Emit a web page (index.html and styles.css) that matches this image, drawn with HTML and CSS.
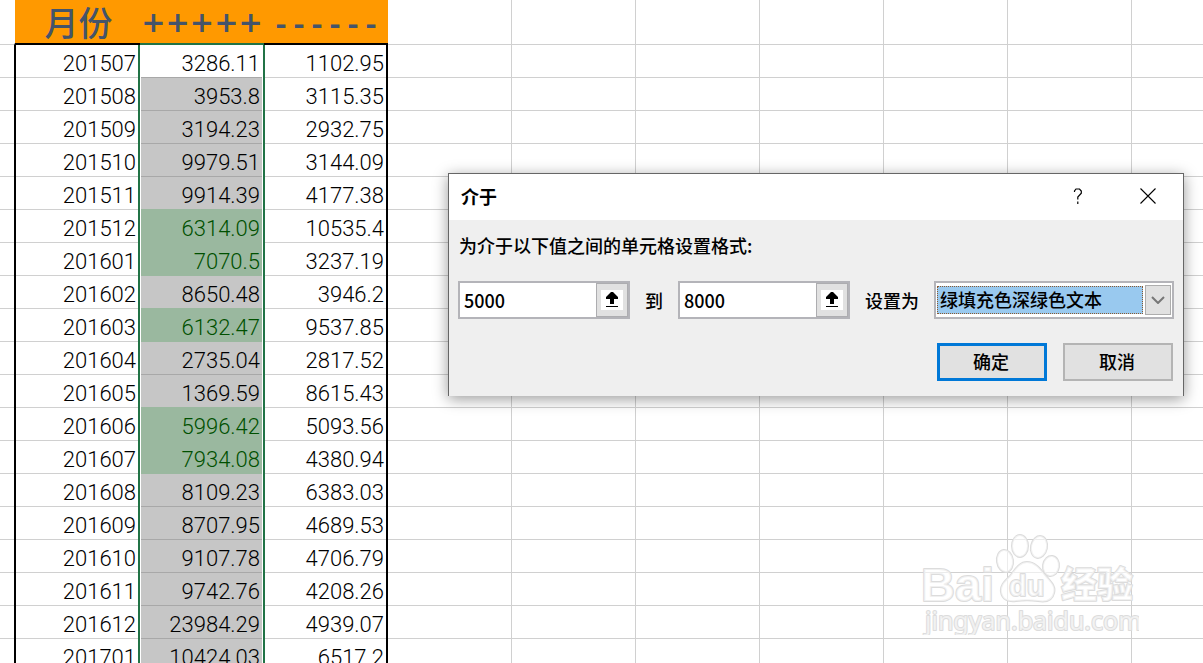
FILE: index.html
```html
<!DOCTYPE html>
<html lang="zh-CN">
<head>
    <meta charset="UTF-8">
    <meta name="viewport" content="width=device-width, initial-scale=1.0">
    <title>介于</title>
    <link rel="stylesheet" href="styles.css">
</head>
<body>
    <main class="sheet">
        <table class="data">
            <colgroup>
                <col class="col-month">
                <col class="col-value">
                <col class="col-value">
            </colgroup>
            <thead>
                <tr><th class="month">月份</th><th class="plus">+++++</th><th class="minus">------</th></tr>
            </thead>
            <tbody>
                <tr><td>201507</td><td class="active">3286.11</td><td>1102.95</td></tr>
                <tr><td>201508</td><td>3953.8</td><td>3115.35</td></tr>
                <tr><td>201509</td><td>3194.23</td><td>2932.75</td></tr>
                <tr><td>201510</td><td>9979.51</td><td>3144.09</td></tr>
                <tr><td>201511</td><td>9914.39</td><td>4177.38</td></tr>
                <tr><td>201512</td><td class="good">6314.09</td><td>10535.4</td></tr>
                <tr><td>201601</td><td class="good">7070.5</td><td>3237.19</td></tr>
                <tr><td>201602</td><td>8650.48</td><td>3946.2</td></tr>
                <tr><td>201603</td><td class="good">6132.47</td><td>9537.85</td></tr>
                <tr><td>201604</td><td>2735.04</td><td>2817.52</td></tr>
                <tr><td>201605</td><td>1369.59</td><td>8615.43</td></tr>
                <tr><td>201606</td><td class="good">5996.42</td><td>5093.56</td></tr>
                <tr><td>201607</td><td class="good">7934.08</td><td>4380.94</td></tr>
                <tr><td>201608</td><td>8109.23</td><td>6383.03</td></tr>
                <tr><td>201609</td><td>8707.95</td><td>4689.53</td></tr>
                <tr><td>201610</td><td>9107.78</td><td>4706.79</td></tr>
                <tr><td>201611</td><td>9742.76</td><td>4208.26</td></tr>
                <tr><td>201612</td><td>23984.29</td><td>4939.07</td></tr>
                <tr><td>201701</td><td>10424.03</td><td>6517.2</td></tr>
            </tbody>
        </table>
    </main>

    <form class="dialog" role="dialog" aria-labelledby="dialog-title">
        <header class="titlebar">
            <h1 id="dialog-title">介于</h1>
            <button type="button" class="title-btn" aria-label="帮助">
                <svg width="10" height="16" viewBox="0 0 10 16"><path d="M1.5 4V3L3 1h3.500L8.300 3v2.200L4.800 9v2.500M4.800 13.500V16" fill="none" stroke="#000" stroke-width="1.2"/></svg>
            </button>
            <button type="button" class="title-btn" aria-label="关闭">
                <svg width="16" height="16" viewBox="0 0 16 16"><path d="M.5.5l15 15M15.5.5l-15 15" stroke="#000" stroke-width="1.1"/></svg>
            </button>
        </header>
        <div class="dialog-body">
            <p>为介于以下值之间的单元格设置格式:</p>
            <div class="fields">
                <div class="ref-box">
                    <input type="text" id="from" value="5000" aria-label="最小值">
                    <button type="button" aria-label="选择单元格">
                        <svg width="22" height="20" viewBox="0 0 22 20"><path fill="#fff" d="M0 0h22v20H0z"/><path d="M10 2h2l5 5v2h-4v5H9V9H5V7zM5 16h12v1H5z"/></svg>
                    </button>
                </div>
                <label for="to">到</label>
                <div class="ref-box">
                    <input type="text" id="to" value="8000">
                    <button type="button" aria-label="选择单元格">
                        <svg width="22" height="20" viewBox="0 0 22 20"><path fill="#fff" d="M0 0h22v20H0z"/><path d="M10 2h2l5 5v2h-4v5H9V9H5V7zM5 16h12v1H5z"/></svg>
                    </button>
                </div>
                <label for="format">设置为</label>
                <div class="combo">
                    <select id="format">
                        <option>绿填充色深绿色文本</option>
                    </select>
                    <span class="arrow">
                        <svg width="14" height="8" viewBox="0 0 14 8"><path d="M1 1l6 6 6-6" fill="none" stroke="#777" stroke-width="2"/></svg>
                    </span>
                </div>
            </div>
            <div class="actions">
                <button type="submit" class="btn primary">确定</button>
                <button type="button" class="btn">取消</button>
            </div>
        </div>
    </form>

    <!-- watermark -->
    <svg class="watermark" width="220" height="106" viewBox="0 0 220 106">
        <ellipse cx="86" cy="32" rx="8" ry="11" transform="rotate(-8 86 32)"/>
        <ellipse cx="101" cy="17" rx="8" ry="11"/>
        <ellipse cx="120" cy="18" rx="8" ry="11" transform="rotate(12 120 18)"/>
        <ellipse cx="132" cy="37" rx="8" ry="10" transform="rotate(8 132 37)"/>
        <path d="M108 33c9 0 14 8 19 14 5 6 10 10 8 17-2 9-10 9-16 8-8-1-14-1-22 0-7 1-14-1-15-9-1-7 4-11 9-16 5-6 9-14 17-14z"/>
        <text class="wm-logo" x="2" y="72">Bai</text>
        <text class="wm-du" x="90" y="67">du</text>
        <text class="wm-cn" x="142" y="69">经验</text>
        <text class="wm-url" x="6" y="101">jingyan.baidu.com</text>
    </svg>
</body>
</html>
```
FILE: styles.css
```css
* {
    box-sizing: border-box;
}
body {
    margin: 0;
    height: 100vh;
    overflow: hidden;
    position: relative;
    font-family: "Noto Sans CJK SC", sans-serif;
    color: #000;
}

/* sheet: grid lines every 124px across and every 33px down,
   the taller header row hides the first horizontal one */
.sheet {
    --green: #217346;
    min-height: 100vh;
    padding-left: 14px;
    background-color: #fff;
    background-image:
        linear-gradient(to right, #d0d0d0 1px, transparent 1px),
        linear-gradient(#fff, #fff),
        linear-gradient(to bottom, #d0d0d0 1px, transparent 1px);
    background-size: 124px 100%, 100% 44px, 100% 33px;
    background-position: 15px 0, 0 0, 0 11px;
    background-repeat: repeat, no-repeat, repeat;
}
.data {
    table-layout: fixed;
    width: 374px;
    border-collapse: separate;
    border-spacing: 0;
}
.col-month {
    width: 126px;
}
.col-value {
    width: 124px;
}
.data th {
    height: 45px;
    padding: 0;
    background: #ff9900;
    border-bottom: 2px solid #000;
    color: #44546a;
    line-height: 42px;
    font-weight: 700;
}
.data .month {
    padding-left: 2px;
    border-left: 1px solid #fff;
    font-size: 34px;
    font-weight: 500;
}
.data .plus {
    border-bottom-color: var(--green);
    font-family: "DejaVu Sans", sans-serif;
    font-size: 29px;
}
.data .minus {
    padding-top: 8px;
    font-family: "Liberation Mono", monospace;
    font-size: 30px;
    line-height: 34px;
}
/* row lines are inset shadows, so the column borders stay unbroken */
.data td {
    --line: #d0d0d0;
    height: 33px;
    padding: 5px 3px 0 0;
    font-family: Roboto, "Liberation Sans", sans-serif;
    font-size: 22px;
    font-weight: 300;
    line-height: 28px;
    text-align: right;
    background: #fff;
    box-shadow: inset 0 -1px var(--line);
}
.data td:first-child {
    border-left: 2px solid #000;
    border-right: 2px solid var(--green);
    padding-right: 2px;
}
.data td:nth-child(2) {
    --line: #a8a8a8;
    background: #c6c6c6;
    border-right: 1px solid var(--green);
    box-shadow: inset 1px 0 #fff, inset -1px 0 #fff, inset 0 -1px var(--line);
}
.data td:nth-child(3) {
    border-left: 1px solid var(--green);
    border-right: 2px solid #000;
    padding-right: 2px;
}
.data td.active {
    background: #fff;
}
.data td.good {
    background: #9ab89f;
    color: #005000;
}
.data td.good,
.data tr:has(+ tr .good) td:nth-child(2) {
    --line: #9ab89f;
}

/* dialog */
.dialog {
    position: absolute;
    top: 173px;
    right: 19px;
    width: 736px;
    background: #efefef;
    border: 1px solid #666;
    border-bottom: 0;
    box-shadow: 0 3px 14px rgba(0, 0, 0, 0.4);
    font-size: 18px;
    font-weight: 500;
}
.titlebar {
    display: flex;
    height: 46px;
    align-items: center;
    padding-bottom: 2px;
    background: #fff;
}
.titlebar h1 {
    flex: 1;
    margin: 0;
    padding-left: 12px;
    font-size: 18px;
    font-weight: 700;
}
.title-btn {
    display: flex;
    width: 70px;
    height: 44px;
    align-items: center;
    justify-content: center;
    padding: 0;
    border: 0;
    background: none;
}
.dialog-body {
    padding: 11px 9px 15px;
}
.dialog-body p {
    margin: 0 0 22px 1px;
    line-height: 28px;
}
.fields {
    display: flex;
    align-items: center;
    gap: 15px;
}
.ref-box {
    display: flex;
    width: 172px;
    height: 38px;
    border: 2px solid #b4b4b9;
    background: #fff;
}
.ref-box input {
    flex: 1;
    min-width: 0;
    padding: 0 0 0 4px;
    border: 0;
    outline: 0;
    font: inherit;
    background: none;
}
.ref-box button {
    display: flex;
    align-items: center;
    justify-content: center;
    width: 32px;
    padding: 0;
    border: 1px solid #adadb0;
    background: #e1e1e1;
}
.combo {
    display: flex;
    flex: 1;
    height: 38px;
    padding: 2px 1px;
    border: 2px solid #b4b4b9;
    background: #fff;
}
.combo select {
    flex: 1;
    min-width: 0;
    margin: 1px 2px 1px 0;
    padding: 0 0 3px 2px;
    appearance: none;
    border: 1px dotted #8a5a30;
    border-radius: 0;
    outline: 0;
    background: #99c9ef;
    color: #000;
    font: inherit;
    line-height: 24px;
}
.arrow {
    display: flex;
    align-items: center;
    justify-content: center;
    width: 26px;
    border: 1px solid #adadad;
    background: #e1e1e1;
}
.actions {
    display: flex;
    justify-content: flex-end;
    gap: 16px;
    margin-top: 24px;
    padding-right: 1px;
}
.btn {
    width: 110px;
    height: 38px;
    padding: 0 2px 2px 0;
    border: 2px solid #b4b4b4;
    background: #e1e1e1;
    color: #000;
    font: inherit;
}
.btn.primary {
    border: 3px solid #0078d7;
}

/* watermark */
.watermark {
    position: absolute;
    right: 64px;
    bottom: 28px;
    pointer-events: none;
    fill: rgba(255, 255, 255, 0.6);
    stroke: #dcdcdc;
    stroke-width: 2px;
    stroke-linejoin: round;
    paint-order: stroke;
}
.wm-logo {
    font: 700 47px "Liberation Sans", sans-serif;
}
.wm-du {
    font: 700 29px "Liberation Sans", sans-serif;
}
.wm-cn {
    font: 900 36px "Noto Sans CJK SC", sans-serif;
}
.wm-url {
    font: 400 25px "Noto Sans", sans-serif;
}
```
